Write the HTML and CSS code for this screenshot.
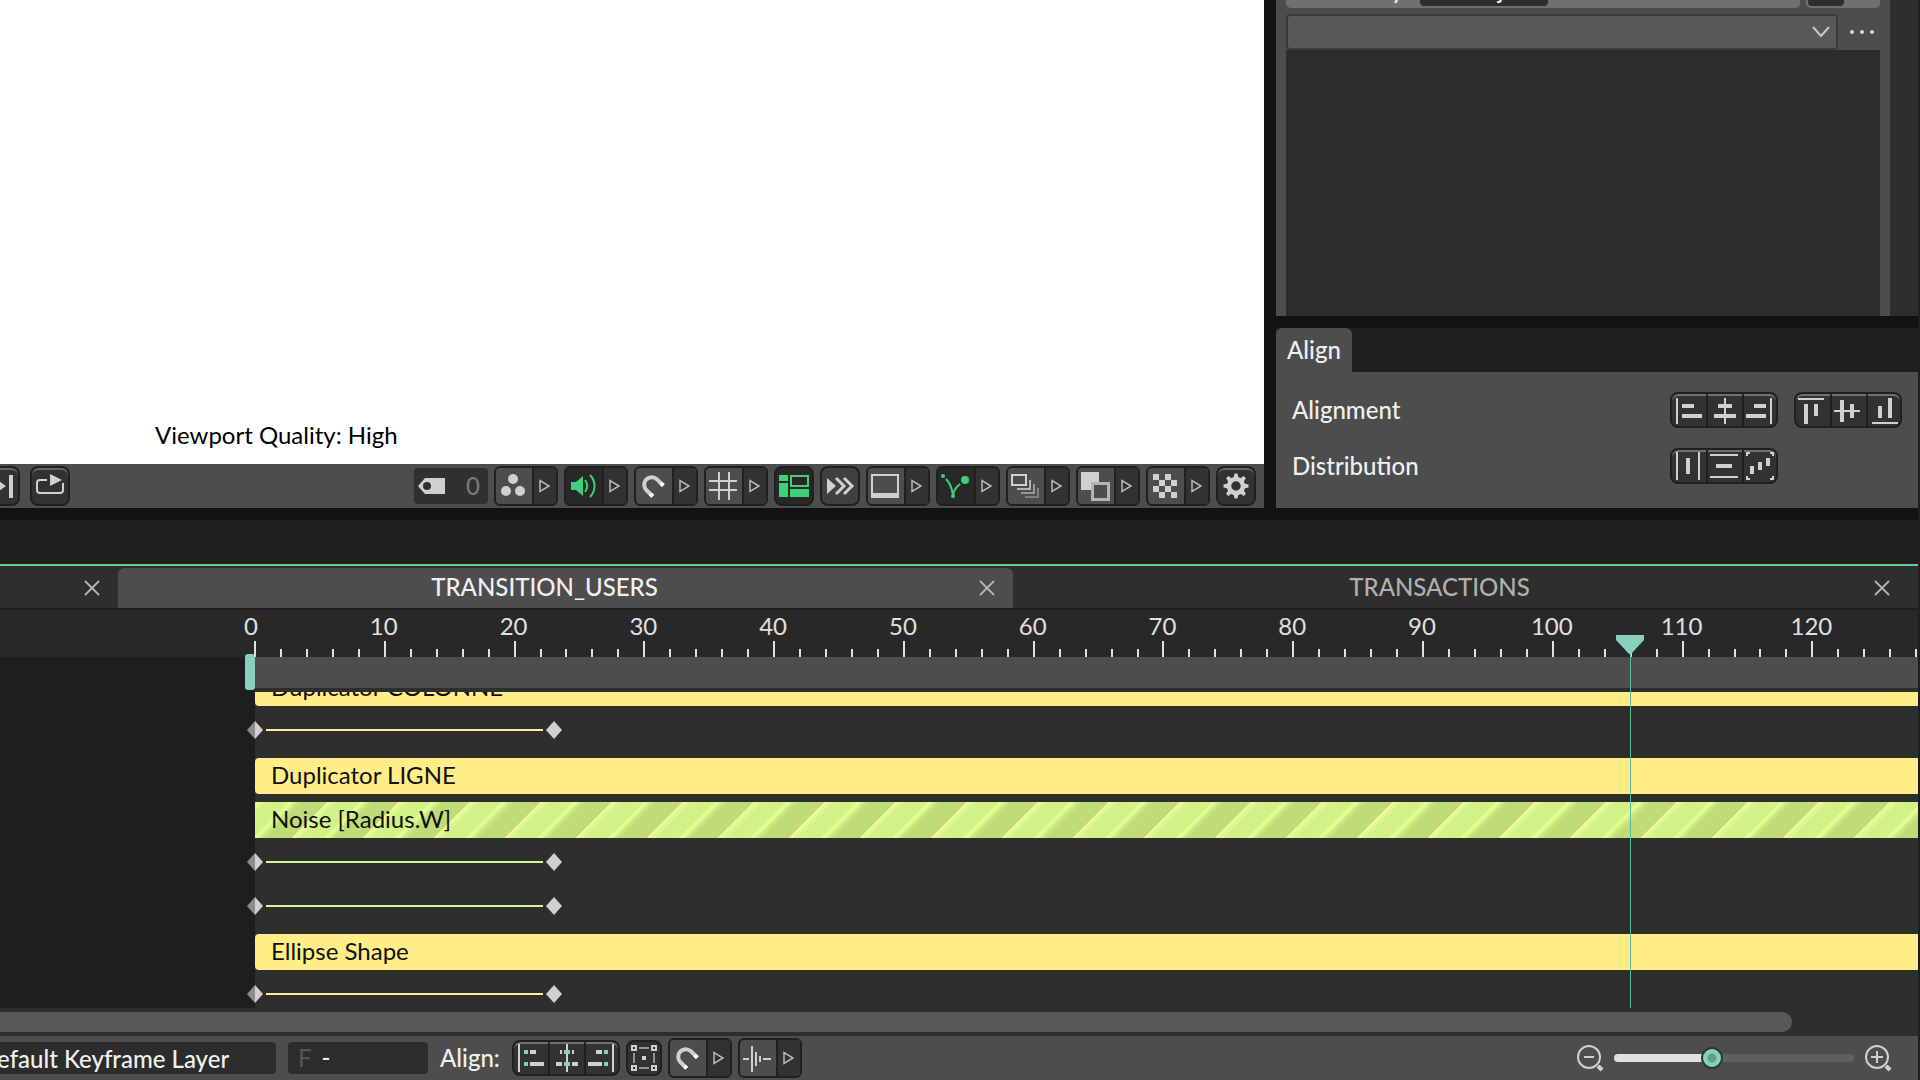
FILE: index.html
```
<!DOCTYPE html>
<html lang="en">
<head>
<meta charset="utf-8">
<title>Animation Editor</title>
<link rel="stylesheet" href="styles.css">
</head>
<body>
<svg class="defs" aria-hidden="true">
  <symbol id="i-arrow" viewBox="0 0 22 36"><path d="M6 12.500v11l9-5.500z" fill="none" stroke="#bbb" stroke-width="1.500"/></symbol>
  <symbol id="i-magnet" viewBox="0 0 36 36"><path d="M27.300 17.700l-6.500-6.500a7.500 7.500 0 0 0-10.600 10.600l6.500 6.500" fill="none" stroke="#d0d0d0" stroke-width="4"/><path d="M27.300 17.700l-2.500-2.500M16.700 28.300l-2.500-2.500" stroke="#fff" stroke-width="4"/></symbol>
  <symbol id="i-close" viewBox="0 0 16 16"><path d="M1.500 1.500l13 13M14.500 1.500l-13 13" stroke="#b4b4b4" stroke-width="1.800" stroke-linecap="round"/></symbol>
  <symbol id="i-first" viewBox="0 0 20 20"><path d="M10 1v18L2 10z" fill="#8c8c8c"/><path d="M10 1v18l8-9z" fill="#d0d0d0"/></symbol>
  <symbol id="i-key" viewBox="0 0 20 20"><path d="M10 1l8 9-8 9-8-9z" fill="#d0d0d0"/></symbol>
</svg>

<main class="workspace">
  <section class="viewport">
    <div class="canvas"><p>Viewport Quality: High</p></div>
    <div class="toolbar">
      <div class="group">
        <button class="tool" aria-label="Last frame"><svg viewBox="0 0 36 36"><path d="M14 11l10 7-10 7zM27 7h4v23h-4z" fill="#d0d0d0"/></svg></button>
        <button class="tool" aria-label="Loop"><svg viewBox="0 0 36 36"><path d="M15 12H8a3 3 0 0 0-3 3v7a3 3 0 0 0 3 3h20a3 3 0 0 0 3-3v-7" fill="none" stroke="#d0d0d0" stroke-width="2"/><path d="M18 6l12 6-12 6z" fill="#d0d0d0"/></svg></button>
      </div>
      <div class="group">
        <label class="counter"><svg viewBox="0 0 28 16" aria-label="Tag"><path d="M0 8l7-8h20v16H7z" fill="#d0d0d0"/><circle cx="9" cy="8" r="4" fill="#303030"/></svg><input value="0" aria-label="Tag number"></label>
        <div class="split">
          <button aria-label="Particles"><svg viewBox="0 0 36 36" fill="#d0d0d0"><circle cx="17" cy="11" r="5"/><circle cx="10" cy="23" r="5"/><circle cx="24" cy="23" r="5"/></svg></button>
          <button class="more" aria-label="Particle options"><svg><use href="#i-arrow"/></svg></button>
        </div>
        <div class="split on">
          <button aria-label="Sound"><svg viewBox="0 0 36 36"><path d="M5 14h5l7-6v20l-7-6H5z" fill="#3fd17a"/><path d="M19 12c3 4 3 8 0 12M24 7c6 6 6 16 0 22" fill="none" stroke="#3fd17a" stroke-width="2"/></svg></button>
          <button class="more" aria-label="Sound options"><svg><use href="#i-arrow"/></svg></button>
        </div>
        <div class="split">
          <button aria-label="Snapping"><svg><use href="#i-magnet"/></svg></button>
          <button class="more" aria-label="Snapping options"><svg><use href="#i-arrow"/></svg></button>
        </div>
        <div class="split">
          <button aria-label="Grid"><svg viewBox="0 0 36 36"><path d="M13 4v28M23 4v28M3 13h28M3 22h28" stroke="#d0d0d0" stroke-width="2"/></svg></button>
          <button class="more" aria-label="Grid options"><svg><use href="#i-arrow"/></svg></button>
        </div>
        <button class="tool on" aria-label="Layout guides"><svg viewBox="0 0 36 36"><path d="M3 7h9v6H3zM3 15h9v14H3zM14 21h19v8H14z" fill="#3fd17a"/><path d="M15 8h17v10H15z" fill="none" stroke="#3fd17a" stroke-width="2"/></svg></button>
        <button class="tool flat" aria-label="Fast preview"><svg viewBox="0 0 36 36"><path d="M5 10l9 8-9 8z" fill="#d0d0d0"/><path d="M14 10l8 8-8 8M22 10l8 8-8 8" fill="none" stroke="#d0d0d0" stroke-width="3"/></svg></button>
        <div class="split">
          <button aria-label="Screen"><svg viewBox="0 0 36 36"><path d="M3 6h28v24H3zM5 8v17h24V8z" fill="#d0d0d0" fill-rule="evenodd"/></svg></button>
          <button class="more" aria-label="Screen options"><svg><use href="#i-arrow"/></svg></button>
        </div>
        <div class="split on">
          <button aria-label="Motion paths"><svg viewBox="0 0 36 36" fill="#3fd17a"><circle cx="5" cy="8" r="2"/><circle cx="27" cy="12" r="4"/><circle cx="15" cy="28" r="2"/><path d="M8 11c4 4 6 9 7 16 1-5 3-8 7-11" fill="none" stroke="#3fd17a" stroke-width="2"/></svg></button>
          <button class="more" aria-label="Motion path options"><svg><use href="#i-arrow"/></svg></button>
        </div>
        <div class="split">
          <button aria-label="Onion skin"><svg viewBox="0 0 36 36" fill="none" stroke-width="2"><path d="M4 7h14v10H4z" stroke="#d0d0d0"/><path d="M22 12v9H9" stroke="#b4b4b4"/><path d="M26 16v9H13" stroke="#969696"/><path d="M30 20v9H17" stroke="#808080"/></svg></button>
          <button class="more" aria-label="Onion skin options"><svg><use href="#i-arrow"/></svg></button>
        </div>
        <div class="split">
          <button aria-label="Overlays"><svg viewBox="0 0 36 36"><path d="M3 4h18v18H3z" fill="#d0d0d0"/><path d="M14.500 15.500h16v16h-16z" fill="#4d4d4d" stroke="#b4b4b4" stroke-width="3"/></svg></button>
          <button class="more" aria-label="Overlay options"><svg><use href="#i-arrow"/></svg></button>
        </div>
        <div class="split">
          <button aria-label="Transparency"><svg viewBox="0 0 36 36"><path d="M5 6h6v6H5zM17 6h6v6h-6zM11 12h6v6h-6zM23 12h6v6h-6zM5 18h6v6H5zM17 18h6v6h-6zM11 24h6v6h-6zM23 24h6v6h-6z" fill="#d0d0d0"/></svg></button>
          <button class="more" aria-label="Transparency options"><svg><use href="#i-arrow"/></svg></button>
        </div>
        <button class="tool" aria-label="Settings"><svg viewBox="0 0 36 36"><circle cx="18" cy="18" r="7" fill="none" stroke="#d0d0d0" stroke-width="4.500"/><path id="tooth" d="M15.500 10l1-4.500h3l1 4.500zM15.500 26l1 4.500h3l1-4.500z" fill="#d0d0d0"/><use href="#tooth" transform="rotate(45 18 18)"/><use href="#tooth" transform="rotate(90 18 18)"/><use href="#tooth" transform="rotate(135 18 18)"/></svg></button>
      </div>
    </div>
  </section>

  <aside class="panels">
    <section class="library">
      <div class="library-main">
        <div class="segments">
          <div class="segment-bar wide"><button>Library</button><button class="current"><i></i>Project</button></div>
          <div class="segment-bar"><button class="current" aria-label="List view"></button></div>
        </div>
        <div class="filter">
          <button class="combo" aria-label="Filter"><svg viewBox="0 0 18 12"><path d="M1 1l8 9 8-9" fill="none" stroke="#c8c8c8" stroke-width="2"/></svg></button>
          <button class="dots" aria-label="More"><svg viewBox="0 0 24 4" fill="#d8d8d8"><circle cx="2" cy="2" r="2"/><circle cx="12" cy="2" r="2"/><circle cx="22" cy="2" r="2"/></svg></button>
        </div>
        <div class="library-list"></div>
      </div>
    </section>
    <section class="align">
      <div class="align-tabs"><button>Align</button></div>
      <div class="align-body">
        <div class="align-row">
          <h2>Alignment</h2>
          <div class="trio">
            <button aria-label="Align left"><svg viewBox="0 0 36 36"><path d="M6 6h2v26H6zM12 12h12v4H12zM12 22h20v4H12z"/></svg></button>
            <button aria-label="Align centre"><svg viewBox="0 0 36 36"><path d="M18 6h2v26h-2zM12 12h14v4H12zM8 22h22v4H8z"/></svg></button>
            <button aria-label="Align right"><svg viewBox="0 0 36 36"><path d="M28 6h2v26h-2zM12 12h12v4H12zM4 22h20v4H4z"/></svg></button>
          </div>
          <div class="trio">
            <button aria-label="Align top"><svg viewBox="0 0 36 36"><path d="M4 6h26v2H4zM10 12h4v20h-4zM20 12h4v12h-4z"/></svg></button>
            <button aria-label="Align middle"><svg viewBox="0 0 36 36"><path d="M4 18h26v2H4zM10 8h4v22h-4zM20 12h4v14h-4z"/></svg></button>
            <button aria-label="Align bottom"><svg viewBox="0 0 36 36"><path d="M6 30h26v2H6zM12 14h4v12h-4zM22 6h4v20h-4z"/></svg></button>
          </div>
        </div>
        <div class="align-row">
          <h2>Distribution</h2>
          <div class="trio">
            <button aria-label="Distribute across"><svg viewBox="0 0 36 36"><path d="M6 4h2v28H6zM28 4h2v28h-2zM16 10h4v16h-4z"/></svg></button>
            <button aria-label="Distribute down"><svg viewBox="0 0 36 36"><path d="M4 6h28v2H4zM4 28h28v2H4zM10 16h16v4H10z"/></svg></button>
            <button aria-label="Distribute both"><svg viewBox="0 0 36 36"><path d="M8 18h4v8H8zM16 14h4v8h-4zM24 10h4v8h-4zM4 4h4v2H6v2H4zM28 4h4v4h-2V6h-2zM4 28h2v2h2v2H4zM30 28h2v4h-4v-2h2z"/></svg></button>
          </div>
          <div class="trio-space"></div>
        </div>
      </div>
    </section>
  </aside>
</main>

<section class="timeline">
  <nav class="comp-tabs">
    <div class="comp-tab start"><button class="close" aria-label="Close tab"><svg><use href="#i-close"/></svg></button></div>
    <div class="comp-tab active"><a href="#users">TRANSITION_USERS</a><button class="close" aria-label="Close tab"><svg><use href="#i-close"/></svg></button></div>
    <div class="comp-tab"><a href="#transactions">TRANSACTIONS</a><button class="close" aria-label="Close tab"><svg><use href="#i-close"/></svg></button></div>
  </nav>

  <div class="time-area">
    <ol class="ruler">
      <li><b class="origin">0</b><i></i><i></i><i></i><i></i><i></i></li>
      <li><b>10</b><i></i><i></i><i></i><i></i><i></i></li>
      <li><b>20</b><i></i><i></i><i></i><i></i><i></i></li>
      <li><b>30</b><i></i><i></i><i></i><i></i><i></i></li>
      <li><b>40</b><i></i><i></i><i></i><i></i><i></i></li>
      <li><b>50</b><i></i><i></i><i></i><i></i><i></i></li>
      <li><b>60</b><i></i><i></i><i></i><i></i><i></i></li>
      <li><b>70</b><i></i><i></i><i></i><i></i><i></i></li>
      <li><b>80</b><i></i><i></i><i></i><i></i><i></i></li>
      <li><b>90</b><i></i><i></i><i></i><i></i><i></i></li>
      <li><b>100</b><i></i><i></i><i></i><i></i><i></i></li>
      <li><b>110</b><i></i><i></i><i></i><i></i><i></i></li>
      <li><b>120</b><i></i><i></i><i></i><i></i><i></i></li>
    </ol>
    <div class="work-area"><span class="range"></span></div>
    <div class="lanes">
      <div class="lane cut"><div class="clip">Duplicator COLONNE</div></div>
      <div class="lane"><div class="keys" style="width:calc(17.95% + 20px)"><svg><use href="#i-first"/></svg><hr><svg><use href="#i-key"/></svg></div></div>
      <div class="lane"><div class="clip">Duplicator LIGNE</div></div>
      <div class="lane"><div class="clip noise">Noise [Radius.W]</div></div>
      <div class="lane"><div class="keys green" style="width:calc(17.95% + 20px)"><svg><use href="#i-first"/></svg><hr><svg><use href="#i-key"/></svg></div></div>
      <div class="lane"><div class="keys green" style="width:calc(17.95% + 20px)"><svg><use href="#i-first"/></svg><hr><svg><use href="#i-key"/></svg></div></div>
      <div class="lane"><div class="clip">Ellipse Shape</div></div>
      <div class="lane"><div class="keys" style="width:calc(17.95% + 20px)"><svg><use href="#i-first"/></svg><hr><svg><use href="#i-key"/></svg></div></div>
    </div>
    <div class="playhead-track"><div class="playhead" style="left:82.680%"><svg viewBox="0 0 30 20"><path d="M1 0h28v5L16 19h-2L1 5z" fill="#88d0bc"/></svg></div></div>
  </div>
  <div class="scroll"><div class="scroll-thumb"></div></div>

  <footer class="footer">
    <input class="layer-name" value="Default Keyframe Layer" aria-label="Keyframe layer">
    <label class="frame-field"><span>F</span><input value="-"></label>
    <span class="align-label">Align:</span>
    <div class="trio">
      <button aria-label="Align keys left"><svg viewBox="0 0 36 36"><path d="M6 4h2v28H6zM18 10h6v4h-6zM18 22h14v4H18z"/><path class="mint" d="M12 10h4v4h-4zM12 22h4v4h-4z"/></svg></button>
      <button aria-label="Align keys centre"><svg viewBox="0 0 36 36"><path d="M18 4h2v28h-2zM12 10h2v4h-2zM24 10h2v4h-2zM8 22h6v4H8zM24 22h6v4h-6z"/><path class="mint" d="M16 10h6v4h-6zM16 22h6v4h-6z"/></svg></button>
      <button aria-label="Align keys right"><svg viewBox="0 0 36 36"><path d="M28 4h2v28h-2zM12 10h6v4h-6zM4 22h14v4H4z"/><path class="mint" d="M20 10h4v4h-4zM20 22h4v4h-4z"/></svg></button>
    </div>
    <button class="tool small" aria-label="Transform box"><svg viewBox="0 0 32 32" fill="none" stroke="#d0d0d0" stroke-width="2"><path d="M4 4h4v4H4zM24 4h4v4h-4zM4 24h4v4H4zM24 24h4v4h-4z"/><path d="M11 6h10M11 26h10M6 11v10M26 11v10" stroke="#b4b4b4" stroke-width="1.500"/><path d="M14 14h4v4h-4z" fill="#d0d0d0" stroke="none"/></svg></button>
    <div class="split">
      <button aria-label="Key snapping"><svg><use href="#i-magnet"/></svg></button>
      <button class="more" aria-label="Key snapping options"><svg><use href="#i-arrow"/></svg></button>
    </div>
    <div class="split">
      <button aria-label="Waveform"><svg viewBox="0 0 36 36"><path d="M3 19h6M12 6v26M16 12v14M20 16v6M23 19h8" stroke="#d0d0d0" stroke-width="2"/></svg></button>
      <button class="more" aria-label="Waveform options"><svg><use href="#i-arrow"/></svg></button>
    </div>
    <div class="zoom">
      <button aria-label="Zoom out"><svg viewBox="0 0 28 28" fill="none" stroke="#d0d0d0"><circle cx="13" cy="13" r="11" stroke-width="2"/><path d="M8 13h10" stroke-width="2"/><path d="M22 22l4 4" stroke-width="4"/></svg></button>
      <input type="range" min="0" max="100" value="40" aria-label="Zoom">
      <button aria-label="Zoom in"><svg viewBox="0 0 28 28" fill="none" stroke="#d0d0d0"><circle cx="13" cy="13" r="11" stroke-width="2"/><path d="M7 13h12M13 7v12" stroke-width="2"/><path d="M22 22l4 4" stroke-width="4"/></svg></button>
    </div>
  </footer>
</section>
</body>
</html>
```
FILE: styles.css
```
* { box-sizing: border-box; }

body {
  margin: 0;
  padding-right: 2px;
  min-height: 100vh;
  display: flex;
  flex-direction: column;
  background: #1e1e1e;
  color: #f0f0f0;
  font: 500 24px/28px Lato, sans-serif;
  overflow: hidden;
}

button, input {
  margin: 0;
  padding: 0;
  border: 0;
  background: none;
  color: inherit;
  font: inherit;
}

svg { display: block; flex: none; }
.defs { width: 0; height: 0; position: absolute; }

/* Upper workspace */
.workspace {
  flex: 1;
  display: flex;
  gap: 12px;
  padding-bottom: 12px;
  background: #121212;
}

.viewport { flex: 1; display: flex; flex-direction: column; }

.canvas {
  flex: 1;
  display: flex;
  align-items: flex-end;
  padding: 0 155px 15px;
  background: #fff;
  color: #000;
  font-weight: 400;
}
.canvas p { margin: 0; }

.toolbar {
  display: flex;
  justify-content: space-between;
  height: 44px;
  padding: 2px 8px 2px 0;
  background: #4d4d4d;
}
.group { display: flex; align-items: center; gap: 6px; }
.group:first-child { gap: 10px; margin-left: -20px; }

.tool {
  width: 40px;
  height: 40px;
  border: 2px solid #202020;
  border-radius: 8px;
  background: #323232;
  box-shadow: inset 0 2px #666;
}
.tool svg { width: 36px; height: 36px; }
.tool.flat { background: #404040; box-shadow: none; }
.tool.on { background: #282828; box-shadow: none; }
.tool.small { width: 36px; height: 36px; margin-right: 6px; box-shadow: none; }
.tool.small svg { width: 32px; height: 32px; }

.split {
  display: flex;
  width: 64px;
  height: 40px;
  border: 2px solid #202020;
  border-radius: 6px;
  background: #4d4d4d;
  overflow: hidden;
}
.split button { width: 36px; }
.split svg { width: 36px; height: 36px; }
.split .more { width: 24px; border-left: 2px solid #202020; background: #323232; }
.split .more svg { width: 22px; }
.split.on { background: #282828; }

.counter {
  display: flex;
  align-items: center;
  width: 74px;
  height: 36px;
  padding: 0 8px 0 4px;
  border-radius: 4px;
  background: #303030;
  color: #777;
}
.counter svg { width: 28px; height: 16px; }
.counter input { width: 34px; text-align: right; }

/* Right-hand panels */
.panels { width: 642px; display: flex; flex-direction: column; gap: 12px; }

.library { flex: 1; display: flex; padding-right: 28px; background: #2e2e2c; overflow: hidden; }
.library-main { flex: 1; display: flex; flex-direction: column; padding: 0 10px; background: #4d4d4d; }
.segments { display: flex; gap: 6px; margin-top: -28px; margin-bottom: 6px; }
.segment-bar { display: flex; width: 74px; height: 36px; padding: 2px; border-radius: 5px; background: #707070; }
.segment-bar.wide { flex: 1; }
.segment-bar button { width: 128px; }
.segment-bar .current { display: flex; align-items: center; justify-content: center; gap: 10px; width: 128px; border-radius: 4px; background: #2e2e2c; }
.segment-bar:last-child .current { width: 36px; }
.segment-bar i { width: 20px; }
.segment-bar.wide button:first-child { padding-left: 26px; width: 132px; }

.filter { display: flex; align-items: center; gap: 12px; height: 36px; padding-right: 6px; }
.combo {
  flex: 1;
  display: flex;
  align-items: center;
  justify-content: flex-end;
  height: 36px;
  padding-right: 6px;
  border: 2px solid #3a3a3a;
  border-radius: 4px;
  background: #585858;
}
.combo svg { width: 18px; height: 12px; }
.dots svg { width: 24px; height: 4px; }
.library-list { flex: 1; background: #2c2c2c; }

.align-tabs { height: 44px; background: #1e1e1e; }
.align-tabs button { width: 76px; height: 44px; border-radius: 6px 6px 0 0; background: #4d4d4d; }
.align-body { display: flex; flex-direction: column; gap: 20px; padding: 20px 16px 24px; background: #4d4d4d; }
.align-row { display: flex; gap: 16px; align-items: center; }
.align-row h2 { flex: 1; margin: 0; font: inherit; }
.trio-space { width: 108px; }

.trio {
  display: flex;
  width: 108px;
  height: 36px;
  border: 2px solid #202020;
  border-radius: 8px;
  background: #323232;
  box-shadow: inset 0 2px #707070;
  overflow: hidden;
}
.trio button { flex: none; display: flex; align-items: center; width: 34px; }
.trio button + button { width: 36px; border-left: 2px solid #202020; }
.trio svg { width: 36px; height: 36px; margin-left: -2px; fill: #d0d0d0; }
.trio .mint { fill: #88d0bc; }

/* Timeline */
.timeline { padding-top: 44px; }

.comp-tabs {
  display: flex;
  height: 46px;
  padding-top: 2px;
  border-top: 2px solid #5fd08c;
  border-bottom: 2px solid #1e1e1e;
  background: #2e2e2c;
}
.comp-tab {
  flex: 1;
  display: flex;
  align-items: center;
  gap: 8px;
  padding-right: 18px;
  color: #b0b0b0;
}
.comp-tab a { flex: 1; padding-bottom: 2px; color: inherit; text-align: center; text-decoration: none; }
.comp-tab:last-child { margin-right: 10px; }
.comp-tab.start { flex: none; width: 118px; justify-content: flex-end; }
.comp-tab.active { border-radius: 6px 6px 0 0; background: #4d4d4d; color: #f0f0f0; }
.close { width: 16px; height: 16px; }
.close svg { width: 16px; height: 16px; }

.time-area { position: relative; background: #2e2e2c; }

.ruler {
  display: flex;
  height: 47px;
  margin: 0;
  padding: 0 0 0 254px;
  list-style: none;
  background: #282828;
  overflow: hidden;
}
.ruler li {
  flex: none;
  width: 7.800%;
  display: grid;
  grid-template-columns: repeat(5, 1fr);
  grid-template-rows: 31px 16px;
  align-items: end;
}
.ruler b { grid-column: 1 / -1; width: 60px; margin-left: -30px; font-weight: 400; line-height: 31px; text-align: center; color: #e0e0e0; }
.ruler .origin { width: 54px; }
.ruler i { height: 8px; border-left: 2px solid #e0e0e0; }
.ruler b + i { height: 16px; }

.work-area { height: 35px; padding: 0 0 4px 255px; background: linear-gradient(90deg, #1e1e1e 255px, #2e2e2c 255px); }
.range { position: relative; display: block; height: 31px; background: #4d4d4d; }
.range::before {
  content: "";
  position: absolute;
  left: -10px;
  top: -3px;
  width: 10px;
  height: 36px;
  border-radius: 3px;
  background: #88d0bc;
}

.lanes { padding: 0 0 0 255px; height: 316px; background: linear-gradient(90deg, #1e1e1e 255px, #2e2e2c 255px); overflow: hidden; }
.lane { display: flex; align-items: center; height: 44px; }
.lane.cut { margin-top: -26px; }
.clip { flex: 1; height: 36px; padding-left: 16px; border-radius: 4px 0 0 4px; background: #ffee88; color: #111; font-weight: 400; line-height: 34px; }
.clip.noise {
  border-radius: 0;
  background: linear-gradient(135deg,
    #fff0a0 0%, #dcff90 2%, #d2f288 7%, #d2f288 22%, #e0ff90 23%, #e0ff90 25%, #cbe882 28%, #bfdc78 32%, #bfdc78 50%,
    #fff0a0 50%, #dcff90 52%, #d2f288 57%, #d2f288 72%, #e0ff90 73%, #e0ff90 75%, #cbe882 78%, #bfdc78 82%, #bfdc78 100%) 2px 0 / 71px 71px;
}
.keys { display: flex; align-items: center; gap: 1px; margin-left: -10px; padding-bottom: 4px; }
.keys svg { width: 20px; height: 20px; }
.keys hr { flex: 1; height: 2px; margin: 0; border: 0; background: #ffee99; }
.keys.green hr { background: #d8f598; }

.playhead-track { position: absolute; top: 25px; bottom: 0; left: 255px; right: 0; pointer-events: none; }
.playhead { position: absolute; top: 0; bottom: 0; width: 1px; background: #5cb89e; }
.playhead svg { width: 30px; height: 20px; margin-left: -15px; }

.scroll { padding: 4px 126px 4px 0; background: #2e2e2c; }
.scroll-thumb { height: 20px; border-radius: 0 10px 10px 0; background: #585858; }

.footer { display: flex; align-items: center; height: 44px; padding-right: 26px; background: #4d4d4d; }
.layer-name { width: 300px; height: 32px; margin-left: -24px; padding-left: 3px; border-radius: 4px; background: #2c2c2c; }
.frame-field { display: flex; align-items: center; gap: 10px; width: 140px; height: 32px; margin-left: 12px; padding-left: 10px; border-radius: 4px; background: #2c2c2c; }
.frame-field span { color: #555; }
.frame-field input { width: 90px; }
.align-label { width: 72px; margin-left: 12px; }
.footer .trio { margin-right: 6px; }
.footer .split { margin-right: 6px; }

.zoom { display: flex; align-items: center; gap: 10px; margin-left: auto; }
.zoom button, .zoom svg { width: 28px; height: 28px; }
.zoom input { width: 240px; height: 24px; appearance: none; }
.zoom input::-webkit-slider-runnable-track { height: 8px; border-radius: 4px; background: linear-gradient(90deg, #e0e0e0 40%, #606060 40%); }
.zoom input::-webkit-slider-thumb {
  width: 22px;
  height: 22px;
  margin-top: -7px;
  appearance: none;
  border: 2px solid #2c3a35;
  border-radius: 50%;
  background: radial-gradient(circle, #5fa08c 4px, #88d0bc 5px);
}
```
